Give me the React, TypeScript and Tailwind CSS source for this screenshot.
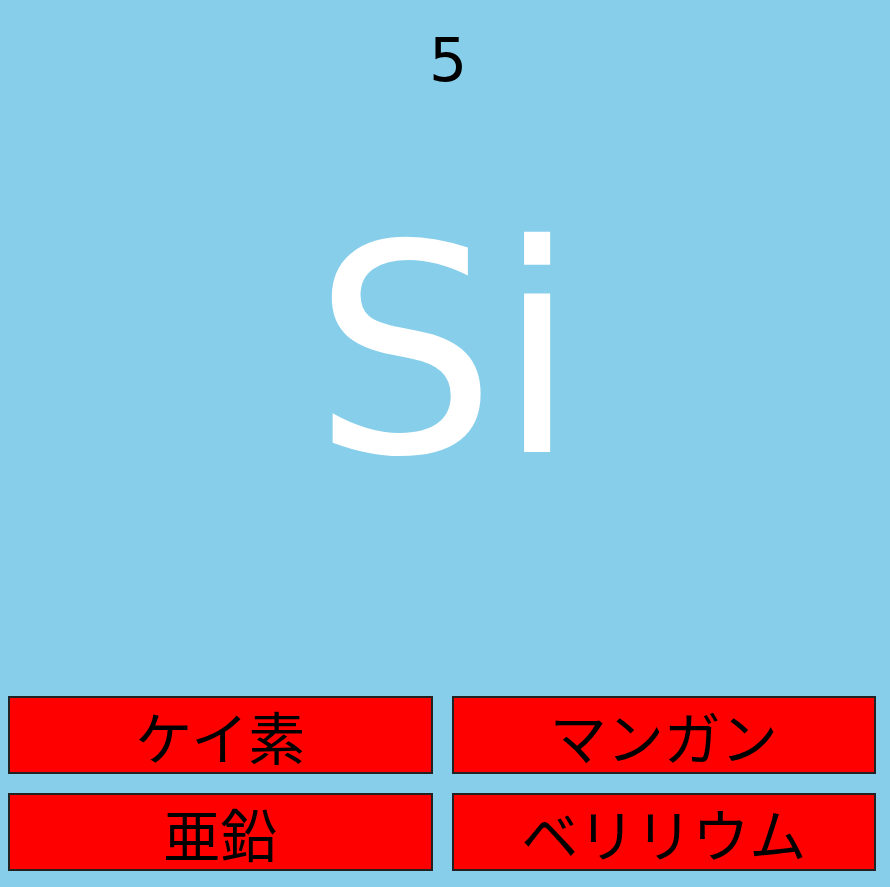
export default function App() {
  const choices = ['ケイ素', 'マンガン', '亜鉛', 'ベリリウム'];

  return (
    <div
      className="flex h-[887px] w-full flex-col bg-[#87ceeb]"
      style={{ fontFamily: '"DejaVu Sans", "Noto Sans CJK JP", sans-serif' }}
    >
      <div className="pt-[22px] pl-[6px] text-center text-[60px] leading-[76px] text-black">5</div>
      <div className="mt-[64px] text-center text-[290px] leading-[380px] text-white">Si</div>
      <div className="mt-auto mb-[16px] grid grid-cols-2 gap-x-[19px] gap-y-[19px] pl-[8px] pr-[14px]">
        {choices.map((c) => (
          <button
            key={c}
            className="flex h-[78px] items-center justify-center border-2 border-[#222] bg-[#ff0000] text-[57px] leading-none text-black"
            style={{ fontFamily: '"Noto Sans CJK JP", sans-serif' }}
          >
            {c}
          </button>
        ))}
      </div>
    </div>
  );
}
